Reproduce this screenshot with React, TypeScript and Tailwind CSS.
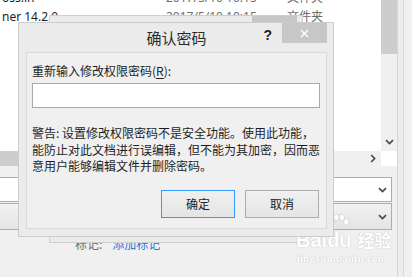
import React from "react";

function ChevronDown({ className = "" }: { className?: string }) {
  return (
    <svg width="9" height="6" viewBox="0 0 9 6" className={className}>
      <path d="M1 1.2 L4.5 4.6 L8 1.2" fill="none" stroke="#4a4a4a" strokeWidth="1.7" />
    </svg>
  );
}

function ChevronRight() {
  return (
    <svg width="6" height="9" viewBox="0 0 6 9">
      <path d="M1.2 1 L4.6 4.5 L1.2 8" fill="none" stroke="#4a4a4a" strokeWidth="1.7" />
    </svg>
  );
}

function Row({ name }: { name: string }) {
  return (
    <div className="flex h-[19px] items-center whitespace-nowrap">
      <div className="w-[166px] pl-[2px] text-[#1e1e1e]">{name}</div>
      <div className="w-[121px] text-[#6d6d6d]">2017/5/10 10:15</div>
      <div className="text-[#6d6d6d]">文件夹</div>
    </div>
  );
}

function Paw() {
  return (
    <svg width="22" height="18" viewBox="0 0 22 18">
      <g fill="#ffffff" stroke="#d2d2d2" strokeWidth="0.8">
        <ellipse cx="4" cy="8" rx="2.6" ry="3.2" />
        <ellipse cx="8.5" cy="3.5" rx="2.6" ry="3.2" />
        <ellipse cx="14" cy="3.5" rx="2.6" ry="3.2" />
        <ellipse cx="18.3" cy="8" rx="2.6" ry="3.2" />
      </g>
    </svg>
  );
}

export default function App() {
  return (
    <div className="relative w-[412px] h-[277px] overflow-hidden bg-[#f0f0f0] font-['Segoe_UI','Noto_Sans','Noto_Sans_CJK_SC',sans-serif] text-[12px] leading-[16px] text-[#1e1e1e]">
      {/* background application window */}
      <div className="flex h-full">
        <div className="w-[397px] flex flex-col">
          <div className="flex h-[151px]">
            <div className="w-[381px] bg-white overflow-hidden">
              <div className="-mt-[12px]">
                <Row name="oss.in" />
                <Row name="ner 14.2.0" />
              </div>
            </div>
            <div className="w-[16px] bg-[#f0f0f0] flex flex-col justify-between">
              <div className="h-[54px] bg-[#cdcdcd]" />
              <div className="h-[18px] flex items-center justify-center">
                <ChevronDown />
              </div>
            </div>
          </div>
          <div className="flex h-[15px]">
            <div className="flex-1 flex bg-[#f0f0f0]">
              <div className="w-[200px] h-full bg-[#cdcdcd]" />
              <div className="ml-auto w-[16px] flex items-center justify-center">
                <ChevronRight />
              </div>
            </div>
            <div className="w-[16px] bg-white" />
          </div>
          <div className="mt-[11px] w-[392px] h-[25px] bg-white border border-l-0 border-[#acacac] flex items-center justify-end pr-[4px]">
            <ChevronDown />
          </div>
          <div className="mt-[1px] w-[392px] h-[27px] bg-gradient-to-b from-[#f2f2f2] to-[#e4e4e4] border border-l-0 border-[#acacac] flex items-center justify-end pr-[4px]">
            <ChevronDown />
          </div>
          <div className="mt-[7px] pl-[75px] flex gap-[10px] leading-[14px] font-['Microsoft_YaHei','Noto_Sans_CJK_SC',sans-serif]">
            <span className="text-[#6d6d6d]">标记:</span>
            <span className="text-[#2e75d6]">添加标记</span>
          </div>
        </div>
        <div className="flex-1 flex">
          <div className="w-[6px] border-l border-[#d6d6d6] bg-[#ececec]" />
          <div className="flex-1 border-l border-[#dadada] bg-[#f0f0f0]" />
        </div>
      </div>

      {/* dialog behind */}
      <div className="absolute left-[49px] top-[15px] w-[254px] h-[228px] border border-[#cfcfcf] bg-[#ebebeb]">
        <div className="flex justify-end pr-[5px]">
          <div className="w-[45px] h-[20px] bg-[#c7c7c7]" />
        </div>
      </div>

      {/* watermark */}
      <div className="absolute left-[296px] top-[222px] flex flex-col items-start text-white [text-shadow:0_0_1px_#c6c6c6,0_0_1px_#c6c6c6]">
        <div className="flex items-end h-[28px]">
          <span className="font-['Liberation_Sans',sans-serif] font-bold text-[20px] leading-[20px]">Bai</span>
          <span className="relative font-['Liberation_Sans',sans-serif] font-bold text-[20px] leading-[20px]">
            <span className="absolute left-[1px] -top-[16px]">
              <Paw />
            </span>
            du
          </span>
          <span className="ml-[6px] font-['Noto_Sans_CJK_SC',sans-serif] font-bold text-[17px] leading-[20px]">经验</span>
        </div>
        <div className="mt-[3px] font-['Liberation_Serif',serif] font-bold text-[11px] leading-[11px] tracking-[0.2px]">jingyan.baidu.com</div>
      </div>

      {/* front dialog */}
      <div className="absolute left-[18px] top-[22px] w-[316px] h-[215px] border border-[#cccccc] bg-[#ebebeb] flex flex-col pl-[7px] pr-[6px] pb-[7px] font-['Microsoft_YaHei','Noto_Sans_CJK_SC',sans-serif]">
        <div className="grid h-[29px]">
          <div className="[grid-area:1/1] justify-self-center pt-[5px] text-[15px] leading-[20px] text-[#2a2a2a]">
            确认密码
          </div>
          <div className="[grid-area:1/1] justify-self-end flex items-start">
            <span className="mt-[4px] mr-[10px] font-['Liberation_Sans',sans-serif] font-bold text-[14px] leading-[16px] text-[#222]">?</span>
            <div className="w-[45px] h-[20px] bg-[#c7c7c7] flex items-center justify-center">
              <svg width="9" height="9" viewBox="0 0 9 9">
                <path d="M1 1 L8 8 M8 1 L1 8" stroke="#ffffff" strokeWidth="1.4" />
              </svg>
            </div>
          </div>
        </div>
        <div className="flex-1 border border-[#d9d9d9] bg-[#f0f0f0] pl-[5px] pr-[6px] flex flex-col">
          <div className="mt-[10px] leading-[16px] whitespace-nowrap">
            重新输入修改权限密码(<span className="underline underline-offset-2">R</span>):
          </div>
          <div className="mt-[4px] w-[288px] h-[25px] bg-white border border-[#a9a9a9]" />
          <div className="mt-[17px] leading-[16.5px] whitespace-nowrap">
            <div>警告: 设置修改权限密码不是安全功能。使用此功能，</div>
            <div>能防止对此文档进行误编辑，但不能为其加密，因而恶</div>
            <div>意用户能够编辑文件并删除密码。</div>
          </div>
          <div className="mt-auto mb-[10px] pr-[1px] flex justify-end gap-[10px]">
            <div className="w-[74px] h-[28px] border border-[#3399ff] bg-gradient-to-b from-[#f0f0f0] to-[#e5e5e5] flex items-center justify-center">
              确定
            </div>
            <div className="w-[74px] h-[28px] border border-[#acacac] bg-gradient-to-b from-[#f0f0f0] to-[#e5e5e5] flex items-center justify-center">
              取消
            </div>
          </div>
        </div>
      </div>
    </div>
  );
}
